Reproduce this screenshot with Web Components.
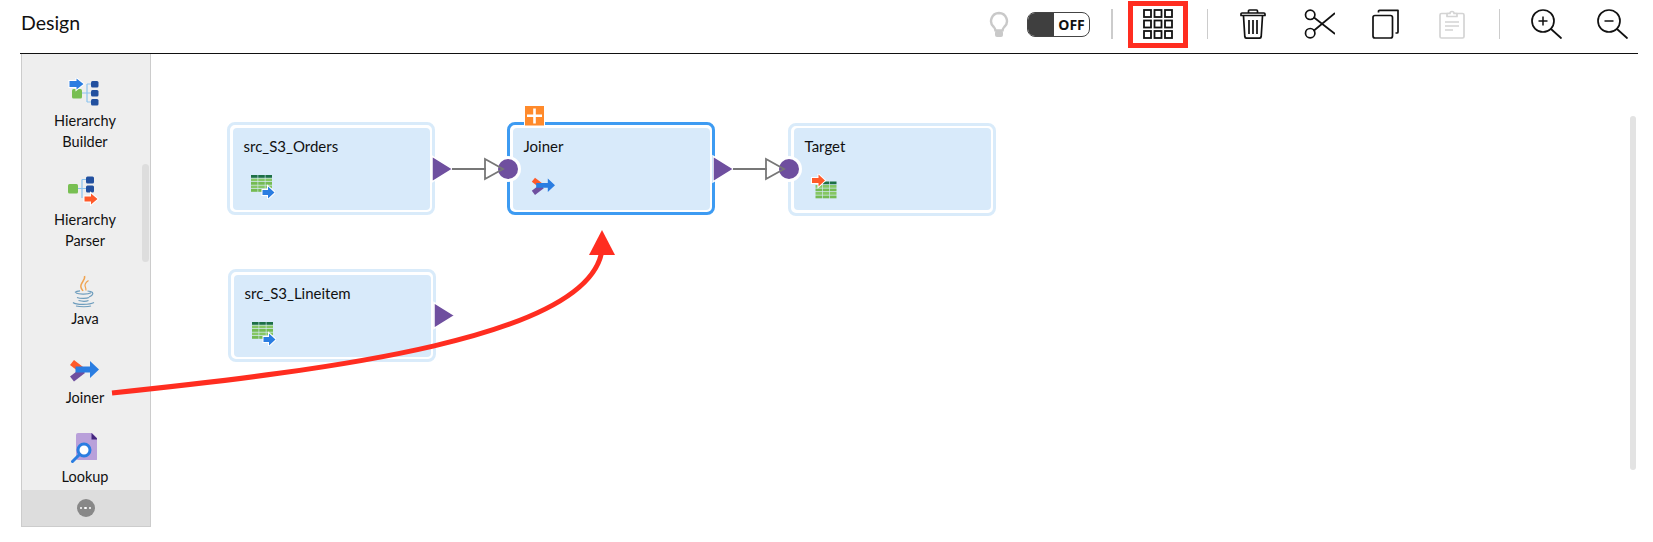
<!DOCTYPE html>
<html lang="en">
<head>
<meta charset="utf-8">
<title>Design</title>
<style>
  html, body { margin: 0; background: #fff; }
  body { font-family: Lato, "Liberation Sans", sans-serif; color: #111; }
</style>
</head>
<body>
<design-page></design-page>

<script>
// icon library, every icon is plain inline svg
const tableCells = (x, y, skipTopLeft) => {
  let out = '';
  for (let r = 0; r < 5; r++) {
    for (let c = 0; c < 3; c++) {
      if (skipTopLeft && r === 0 && c === 0) continue;
      const fill = r === 0 ? '#1c6f45' : (r % 2 ? '#86c764' : '#74bb52');
      out += `<rect x="${x + c * 7.2}" y="${y + r * 3.5}" width="6.6" height="2.8" fill="${fill}"/>`;
    }
  }
  return out;
};

const ICONS = {
  bulb: `<svg width="20" height="27" viewBox="0 0 20 27" fill="none">
    <path d="M10 2a8 8 0 0 0-5.2 14c1.2 1.2 1.5 2.2 1.6 3.4h7.2c.1-1.2.4-2.2 1.6-3.4A8 8 0 0 0 10 2z" stroke="#c9c9c9" stroke-width="2.400" fill="#fff"/>
    <rect x="6" y="19.500" width="8" height="6.500" rx="2" fill="#c9c9c9"/>
  </svg>`,
  grid: `<svg width="30" height="30" viewBox="0 0 30 30" fill="none" stroke="#111" stroke-width="1.800">
    <rect x="1" y="1" width="7" height="7"/><rect x="11.500" y="1" width="7" height="7"/><rect x="22" y="1" width="7" height="7"/>
    <rect x="1" y="11.500" width="7" height="7"/><rect x="11.500" y="11.500" width="7" height="7"/><rect x="22" y="11.500" width="7" height="7"/>
    <rect x="1" y="22" width="7" height="7"/><rect x="11.500" y="22" width="7" height="7"/><rect x="22" y="22" width="7" height="7"/>
  </svg>`,
  trash: `<svg width="26" height="30" viewBox="0 0 26 30" fill="none" stroke="#111" stroke-width="1.700" stroke-linejoin="round">
    <path d="M1 6.500h24v-1.500a1 1 0 0 0-1-1H2a1 1 0 0 0-1 1z"/>
    <path d="M8.500 4V2a1 1 0 0 1 1-1h7a1 1 0 0 1 1 1v2"/>
    <path d="M3.500 7l1.300 20.500a2 2 0 0 0 2 1.700h12.400a2 2 0 0 0 2-1.700L22.500 7"/>
    <path d="M9 11v14M13 11v14M17 11v14"/>
  </svg>`,
  scissors: `<svg width="31" height="30" viewBox="0 0 31 30" fill="none" stroke="#111" stroke-width="1.700">
    <circle cx="6.200" cy="5.800" r="4.700"/><circle cx="6.200" cy="24.200" r="4.700"/>
    <path d="M10 8.500L30.500 24.500M10 21.500L30.500 4.500" stroke-linecap="round"/>
  </svg>`,
  copy: `<svg width="27" height="30" viewBox="0 0 27 30" fill="none" stroke="#111" stroke-width="1.700" stroke-linejoin="round">
    <rect x="1" y="6.500" width="19.500" height="22.500" rx="2"/>
    <path d="M6.500 3.500V2.300a1 1 0 0 1 1-1H26V23a1 1 0 0 1-1 1h-1.500"/>
  </svg>`,
  paste: `<svg width="26" height="30" viewBox="0 0 26 30" fill="none" stroke="#d4d4d4" stroke-width="1.700" stroke-linejoin="round">
    <rect x="1" y="4.500" width="24" height="24.500" rx="1.500"/>
    <path d="M8 7.500V4.500h3a2 2 0 0 1 4 0h3v3z" fill="#fff"/>
    <path d="M6 13h14M6 17h14M6 21h8" stroke-width="1.400"/>
  </svg>`,
  zoomin: `<svg width="31" height="30" viewBox="0 0 31 30" fill="none" stroke="#111" stroke-width="1.700">
    <circle cx="12" cy="12" r="11"/>
    <path d="M20 20L30 29" stroke-linecap="round"/>
    <path d="M7.500 12h9M12 7.500v9" stroke-width="1.500"/>
  </svg>`,
  zoomout: `<svg width="31" height="30" viewBox="0 0 31 30" fill="none" stroke="#111" stroke-width="1.700">
    <circle cx="12" cy="12" r="11"/>
    <path d="M20 20L30 29" stroke-linecap="round"/>
    <path d="M7.500 12h9" stroke-width="1.500"/>
  </svg>`,
  builder: `<svg width="31" height="29" viewBox="0 0 31 29" fill="none">
    <path d="M14 15H23M19 6V24M19 6H23M19 24H23" stroke="#8cc4ef" stroke-width="1.200"/>
    <rect x="4" y="11" width="10" height="9.500" rx="1.500" fill="#78bf52"/>
    <rect x="23" y="3" width="7.500" height="6.500" rx="1.500" fill="#22509f"/>
    <rect x="23" y="12" width="7.500" height="6.500" rx="1.500" fill="#22509f"/>
    <rect x="23" y="21" width="7.500" height="6.500" rx="1.500" fill="#22509f"/>
    <path d="M1.500 3h7V.5L15.500 6l-7 5.500V9h-7z" fill="#2a7de1" stroke="#fff" stroke-width="2" paint-order="stroke"/>
  </svg>`,
  parser: `<svg width="31" height="30" viewBox="0 0 31 30" fill="none">
    <path d="M10 12.500H18M14 3.500V22M14 3.500H18" stroke="#8cc4ef" stroke-width="1.200"/>
    <rect x="0" y="8" width="10" height="9.500" rx="1.500" fill="#78bf52"/>
    <rect x="18" y="0.500" width="8" height="7" rx="1.500" fill="#22509f"/>
    <rect x="18" y="9.500" width="8" height="7" rx="1.500" fill="#22509f"/>
    <path d="M16.500 20.500h6.500v-3l6.500 5.500-6.500 5.500v-3h-6.500z" fill="#ff5a2a" stroke="#fff" stroke-width="2" paint-order="stroke"/>
  </svg>`,
  java: `<svg width="23" height="33" viewBox="0 0 23 33" fill="none">
    <path d="M12.500 1C14 5 7.500 8 9 12.500c.5 1.500 1.500 2.500 2 3.500" stroke="#f0a350" stroke-width="1.500"/>
    <path d="M16.500 5.500C13.500 7.500 12 9.500 13.500 12.500c.4.900.6 2 .3 3" stroke="#f0a350" stroke-width="1.200"/>
    <path d="M4 18c3 1.500 12 1.500 15-.3M3 17.500c1-1 3-1.500 5-1.600M15.500 16c2 .1 4 .5 5 1.500 1 1.500-.5 3.500-3.500 4.500" stroke="#6e9dbd" stroke-width="1.200"/>
    <path d="M5 22.500c3 1.200 10 1.200 12 0M6.500 25.500c3 .8 8 .8 10 0M1 27.500c3 2.500 17 2.500 21 0M4 31c4 1 12 1 15 0" stroke="#6e9dbd" stroke-width="1.200"/>
  </svg>`,
  joiner: `<svg width="30" height="26" viewBox="0 0 30 26" fill="none">
    <path d="M3 4.500L14 13" stroke="#ff5a2a" stroke-width="6.500"/>
    <path d="M3 21L14 12.500" stroke="#6f4f9f" stroke-width="6.500"/>
    <path d="M6.500 8.500H21V3l9 8.500-9 8.500v-5.500H6.500z" fill="#2a7de1"/>
  </svg>`,
  lookup: `<svg width="26" height="32" viewBox="0 0 26 32" fill="none">
    <path d="M5 2a2 2 0 0 1 2-2h14l6 6v19a2 2 0 0 1-2 2H7a2 2 0 0 1-2-2z" fill="#b9a0da"/>
    <path d="M20.500 0L27 6.500h-6.500z" fill="#44267e"/>
    <circle cx="13" cy="17" r="6" fill="#fff" stroke="#2a7de1" stroke-width="3"/>
    <path d="M8.500 21.500L1.500 28.500" stroke="#2a7de1" stroke-width="3" stroke-linecap="round"/>
  </svg>`,
  source: `<svg width="24" height="24" viewBox="0 0 24 24" fill="none">
    ${tableCells(0, 0)}
    <path d="M11.500 15h5.500v-3.500l6.500 6-6.500 6V20h-5.500z" fill="#2a7de1" stroke="#fff" stroke-width="2" paint-order="stroke"/>
  </svg>`,
  target: `<svg width="26" height="25" viewBox="0 0 26 25" fill="none">
    ${tableCells(4.500, 7.500, true)}
    <path d="M1 4h6.500V.5l6.500 6-6.500 6V9H1z" fill="#ff5a2a" stroke="#fff" stroke-width="2" paint-order="stroke"/>
  </svg>`
};

// small helper so every class looks the same
class ShadowBase extends HTMLElement {
  constructor() {
    super();
    this.attachShadow({ mode: 'open' });
  }
  connectedCallback() {
    this.shadowRoot.innerHTML = this.render();
  }
}

/**
 * <tool-icon>
 * Atributos: name, flagged (red outline around the active tool)
 */
class ToolIcon extends ShadowBase {
  render() {
    return `
      <style>
        :host { display: flex; align-items: center; justify-content: center; height: 30px; }
        :host([flagged]) {
          box-sizing: border-box; width: 60px; height: 47px;
          border: 5px solid #ff2d20;
        }
        svg { display: block; }
      </style>
      ${ICONS[this.getAttribute('name')]}`;
  }
}

class OffToggle extends ShadowBase {
  render() {
    return `
      <style>
        :host {
          display: flex; box-sizing: border-box; width: 63px; height: 25px;
          border: 1px solid #444; border-radius: 8px; overflow: hidden;
        }
        .knob { width: 26px; background: #3f3f3f; }
        .label {
          flex: 1; display: flex; align-items: center; justify-content: center;
          font: 700 14px "Open Sans", sans-serif; color: #111;
        }
      </style>
      <div class="knob"></div>
      <div class="label">OFF</div>`;
  }
}

class TopBar extends ShadowBase {
  render() {
    return `
      <style>
        :host {
          display: flex; align-items: center; box-sizing: border-box;
          height: 54px; margin: 0 15px 0 20px; padding-bottom: 5px;
          border-bottom: 1px solid #111;
        }
        .title { flex: 1; font-size: 19.500px; padding: 0 0 4px 1px; color: #111; }
        .sep { width: 1.500px; height: 30px; background: #ccc; }
        .tools { display: flex; align-items: center; }
        tool-icon[name=bulb] { margin-right: 18px; }
        off-toggle { margin-right: 21px; }
        .sep.a { margin-right: 15.500px; }
        tool-icon[flagged] { margin-right: 18.500px; }
        .sep.b { margin-right: 32px; }
        tool-icon[name=trash] { margin-right: 38px; }
        tool-icon[name=scissors] { margin-right: 36.500px; }
        tool-icon[name=copy] { margin-right: 40px; }
        tool-icon[name=paste] { margin-right: 34px; }
        .sep.c { margin-right: 31px; }
        tool-icon[name=zoomin] { margin-right: 35px; }
        tool-icon[name=zoomout] { margin-right: 10px; }
      </style>
      <div class="title">Design</div>
      <div class="tools">
        <tool-icon name="bulb"></tool-icon>
        <off-toggle></off-toggle>
        <div class="sep a"></div>
        <tool-icon name="grid" flagged></tool-icon>
        <div class="sep b"></div>
        <tool-icon name="trash"></tool-icon>
        <tool-icon name="scissors"></tool-icon>
        <tool-icon name="copy"></tool-icon>
        <tool-icon name="paste"></tool-icon>
        <div class="sep c"></div>
        <tool-icon name="zoomin"></tool-icon>
        <tool-icon name="zoomout"></tool-icon>
      </div>`;
  }
}

class PaletteItem extends ShadowBase {
  render() {
    return `
      <style>
        :host {
          display: flex; flex-direction: column; align-items: center;
          font-size: 14.500px; line-height: 20.500px; color: #111; text-align: center;
        }
        .ico {
          height: var(--ico, 29px); margin: 0 3px var(--m, 4px) 0;
          display: flex; align-items: flex-start; justify-content: center;
        }
        svg { display: block; }
      </style>
      <div class="ico">${ICONS[this.getAttribute('icon')]}</div>
      <slot></slot>`;
  }
}

class TransformPalette extends ShadowBase {
  render() {
    return `
      <style>
        :host {
          display: flex; flex-direction: column; box-sizing: border-box;
          width: 130px; height: 473px; background: #eee;
          border: 1px solid #ccc; border-top: 0;
        }
        .list {
          flex: 1; min-height: 0; position: relative; overflow: hidden;
          display: flex; flex-direction: column; gap: 24px;
          padding: 24px 2px 0 0;
        }
        .thumb {
          position: absolute; right: 1px; top: 110px; width: 7px; height: 98px;
          border-radius: 4px; background: #ddd;
        }
        .foot {
          height: 36px; background: #ddd; display: flex; align-items: center; justify-content: center;
          padding-right: 1px;
        }
        .more {
          width: 18px; height: 18px; border-radius: 50%; background: #888;
          display: flex; align-items: center; justify-content: center; gap: 2px;
        }
        .more i { width: 2.500px; height: 2.500px; border-radius: 50%; background: #fff; }
      </style>
      <div class="list">
        <palette-item icon="builder">Hierarchy<br>Builder</palette-item>
        <palette-item icon="parser" style="--ico:30px;--m:4px">Hierarchy<br>Parser</palette-item>
        <palette-item icon="java" style="--ico:33px;--m:1px">Java</palette-item>
        <palette-item icon="joiner" style="--ico:26px;--m:4px;margin-top:4px">Joiner</palette-item>
        <palette-item icon="lookup" style="--ico:32px;--m:2px;margin-top:1px">Lookup</palette-item>
        <div class="thumb"></div>
      </div>
      <div class="foot"><div class="more"><i></i><i></i><i></i></div></div>`;
  }
}

/**
 * <flow-node>
 * Atributos: label, icon, selected
 * x, y come from the host style since the canvas is free placement
 */
class FlowNode extends ShadowBase {
  render() {
    const icon = this.getAttribute('icon');
    return `
      <style>
        :host {
          position: absolute; box-sizing: border-box; width: 208px; height: 93px;
          border: 3px solid #d9ebfa; border-radius: 8px; background: #fff; padding: 2.500px;
        }
        :host([selected]) { border-color: #3d9bf2; }
        .body {
          height: 100%; box-sizing: border-box; background: #d8eafa; border-radius: 4px;
          padding: 8px 11px; font-size: 15px; line-height: 20px; color: #111;
        }
        .ico { margin: 19px 0 0 7px; height: 26px; }
        .ico svg { display: block; }
        .small svg { width: 24px; height: 21px; }
        .small { margin-top: 20px; }
        .tgt { margin: 18px 0 0 6px; }
      </style>
      <div class="body">
        <div>${this.getAttribute('label')}</div>
        <div class="ico ${icon === 'joiner' ? 'small' : ''} ${icon === 'target' ? 'tgt' : ''}">${ICONS[icon]}</div>
      </div>`;
  }
}

class FlowCanvas extends ShadowBase {
  render() {
    const outPort = (x, y) => `<path d="M${x} ${y - 13}v26l21-13z" fill="#6f4f9f" stroke="#fff" stroke-width="1.500"/>`;
    const inPort = (x, y) => `
      <circle cx="${x + 23}" cy="${y}" r="13" fill="#fff"/>
      <circle cx="${x + 23}" cy="${y}" r="10" fill="#6f4f9f"/>
      <path d="M${x} ${y - 10}v20l18-10z" stroke="#777" stroke-width="1.800" stroke-linejoin="miter"/>`;
    return `
      <style>
        :host { display: block; position: relative; flex: 1; height: 488px; }
        svg { position: absolute; left: 0; top: 0; pointer-events: none; }
        .thumb {
          position: absolute; right: 17px; top: 62px; width: 6px; height: 354px;
          border-radius: 3px; background: #e3e3e3;
        }
      </style>
      <flow-node label="src_S3_Orders" icon="source" style="left:227px;top:68px"></flow-node>
      <flow-node label="Joiner" icon="joiner" selected style="left:507px;top:68px"></flow-node>
      <flow-node label="Target" icon="target" style="left:788px;top:68.500px"></flow-node>
      <flow-node label="src_S3_Lineitem" icon="source" style="left:228px;top:215px"></flow-node>
      <div class="thumb"></div>
      <svg width="1653" height="488" viewBox="0 54 1653 488" fill="none">
        ${inPort(485, 169)}${inPort(766, 169)}
        ${outPort(432, 169)}${outPort(713, 169)}${outPort(434, 315.5)}
        <path d="M452 169H486M733 169H767" stroke="#777" stroke-width="1.800"/>
        <rect x="524" y="105" width="21" height="21" fill="#fff"/>
        <rect x="525" y="106" width="19" height="19.500" fill="#ff8a2b"/>
        <path d="M527 115.700h15M534.500 108.500v15" stroke="#fff" stroke-width="2.600"/>
      </svg>`;
  }
}

// red hand drawn style arrow, lies over the palette and the nodes
class AnnotationArrow extends ShadowBase {
  render() {
    return `
      <style>
        :host { position: absolute; left: 0; top: 0; z-index: 2; pointer-events: none; }
        svg { display: block; }
      </style>
      <svg width="1653" height="542" viewBox="0 0 1653 542" fill="none">
        <path d="M112 393C330 370 590 338 602 250" stroke="#ff2d20" stroke-width="5"/>
        <path d="M602 230L615 255H589z" fill="#ff2d20"/>
      </svg>`;
  }
}

class DesignPage extends ShadowBase {
  render() {
    return `
      <style>
        :host { display: block; width: 1653px; height: 542px; position: relative; overflow: hidden; }
        .main { display: flex; height: 488px; position: relative; }
        transform-palette { position: relative; z-index: 1; margin-left: 21px; }
        flow-canvas { position: absolute; left: 0; top: 0; width: 1653px; }
      </style>
      <top-bar></top-bar>
      <div class="main">
        <flow-canvas></flow-canvas>
        <transform-palette></transform-palette>
      </div>
      <annotation-arrow></annotation-arrow>`;
  }
}

customElements.define('tool-icon', ToolIcon);
customElements.define('off-toggle', OffToggle);
customElements.define('top-bar', TopBar);
customElements.define('palette-item', PaletteItem);
customElements.define('transform-palette', TransformPalette);
customElements.define('flow-node', FlowNode);
customElements.define('flow-canvas', FlowCanvas);
customElements.define('annotation-arrow', AnnotationArrow);
customElements.define('design-page', DesignPage);
</script>
</body>
</html>
